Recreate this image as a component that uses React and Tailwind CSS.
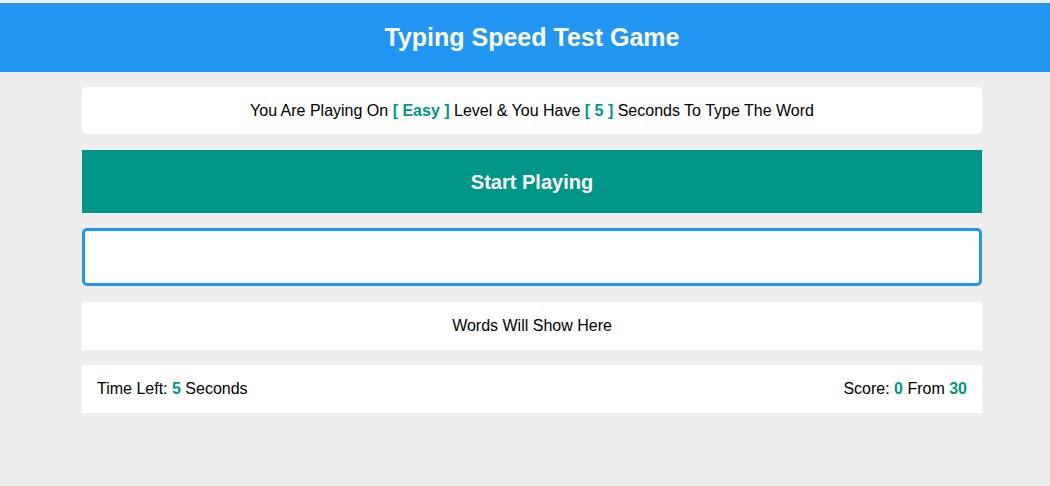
import React from 'react';

const App = () => {
  return (
    <div className="min-h-[486px] bg-[#eeeeee] overflow-hidden font-['Liberation_Sans',Arial,sans-serif] text-black">
      <div className="w-[1064px] pt-[3px]">
        {/* Header */}
        <div className="h-[69px] bg-[#2196f3] flex items-center justify-center">
          <h1 className="text-white text-[25px] font-bold">Typing Speed Test Game</h1>
        </div>

        <div className="w-[900px] mx-auto pt-[15px]">
          {/* Level info */}
          <div className="h-[47px] bg-white rounded-[5px] flex items-center justify-center text-[16px]">
            <span>
              You Are Playing On <span className="text-[#009688] font-bold">[ Easy ]</span> Level &amp; You Have{' '}
              <span className="text-[#009688] font-bold">[ 5 ]</span> Seconds To Type The Word
            </span>
          </div>

          {/* Start */}
          <div className="mt-[16px] h-[63px] bg-[#009688] flex items-center justify-center text-white text-[20px] font-bold">
            Start Playing
          </div>

          {/* Input */}
          <input
            className="mt-[15px] block w-full h-[58px] bg-white border-[3px] border-[#2196f3] rounded-[5px] outline-none px-3 text-[16px]"
            type="text"
          />

          {/* Words */}
          <div className="mt-[16px] h-[48px] bg-white flex items-center justify-center text-[16px]">
            Words Will Show Here
          </div>

          {/* Control */}
          <div className="mt-[15px] h-[48px] bg-white flex items-center justify-between px-[15px] text-[16px]">
            <span>
              Time Left: <span className="text-[#009688] font-bold">5</span> Seconds
            </span>
            <span>
              Score: <span className="text-[#009688] font-bold">0</span> From{' '}
              <span className="text-[#009688] font-bold">30</span>
            </span>
          </div>
        </div>
      </div>
    </div>
  );
};

export default App;
